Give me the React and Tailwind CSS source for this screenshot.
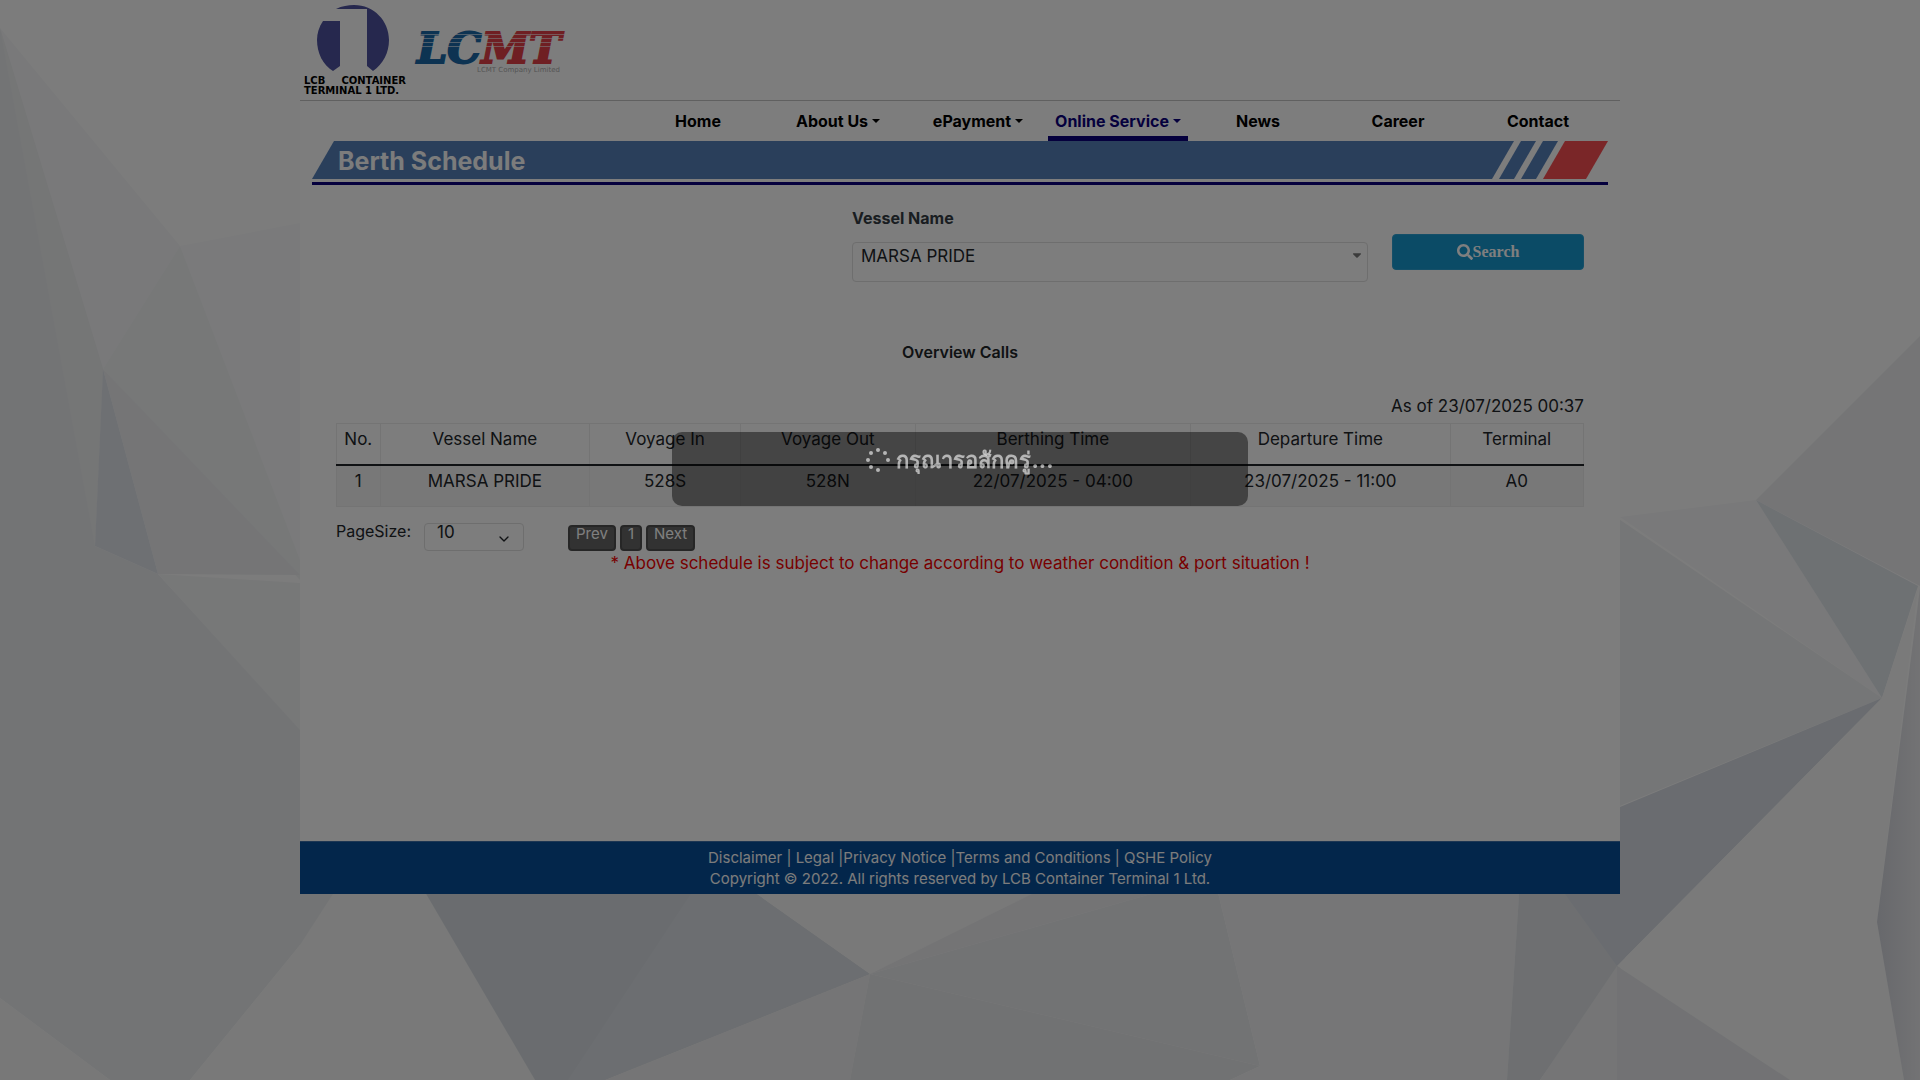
import React from "react";
import { FaSearch, FaCaretDown } from "react-icons/fa";
import { ChevronDown } from "lucide-react";

const facets = [
  ["0,28 180,246 103,369", "#f2f3f4"],
  ["180,246 300,223 300,560", "#f4f5f6"],
  ["180,246 300,560 300,580 103,369", "#eef0f1"],
  ["0,28 103,369 95,546 158,574 300,728 700,900 300,945 190,1080 110,1080 0,998", "#e7e9eb"],
  ["0,28 103,369 95,546", "#ebeced"],
  ["103,369 300,575 158,574", "#eaebed"],
  ["158,574 300,583 300,730", "#eff0f1"],
  ["103,369 158,574 95,546", "#dde1e7"],
  ["0,998 110,1080 0,1080", "#f0f1f1"],
  ["300,945 342,880 425,880 535,1080 190,1080", "#f2f3f2"],
  ["418,880 737,880 870,974 605,1080 535,1080", "#d4d9df"],
  ["700,880 737,880 870,974 605,1080 568,1080", "#d9dde2"],
  ["737,880 1060,880 870,974", "#f2f2f2"],
  ["1060,880 1200,880 870,974", "#e9e9eb"],
  ["1200,880 1215,880 1260,1066 870,974", "#e5e6e9"],
  ["870,974 850,1080 605,1080", "#ebebec"],
  ["870,974 1260,1066 1230,1080 850,1080", "#e3e4e6"],
  ["1215,880 1520,880 1507,1080 1230,1080 1260,1066", "#ecedee"],
  ["1520,880 1625,880 1625,962 1540,1080 1507,1080", "#dcdfe3"],
  ["1617,966 1618,1080 1540,1080", "#eaebec"],
  ["1620,517 1756,500 1882,698", "#f2f3f4"],
  ["1610,513 1882,698 1610,810", "#ebecee"],
  ["1756,500 1920,336 1920,586", "#eaebed"],
  ["1756,500 1918,586 1882,698", "#dde2e7"],
  ["1882,698 1620,807 1560,830 1565,894 1617,966", "#d4d9e0"],
  ["1882,698 1918,588 1877,922 1904,1080 1790,1080 1617,966", "#f4f5f4"],
  ["1617,966 1790,1080 1617,1080", "#e4e5e8"],
];

function Backdrop() {
  return (
    <svg className="absolute inset-0 -z-10 h-full w-full" viewBox="0 0 1920 1080" preserveAspectRatio="xMidYMid slice" aria-hidden="true">
      <defs>
        <linearGradient id="edge" x1="0" x2="1" y1="0" y2="0">
          <stop offset="0" stopColor="#cfd1d8" />
          <stop offset="1" stopColor="#e6e6e9" />
        </linearGradient>
      </defs>
      <rect width="1920" height="1080" fill="#f9f9f9" />
      {facets.map(([points, fill]) => (
        <polygon key={points} points={points} fill={fill} />
      ))}
      <polygon points="1920,588 1877,922 1904,1080 1920,1080" fill="url(#edge)" />
    </svg>
  );
}

function LcbLogo() {
  return (
    <a href="#home" className="flex w-[102px] flex-col text-black">
      <svg className="ml-3 h-[68px] w-[74px]" viewBox="0 0 74 68" aria-hidden="true">
        <g fill="#4c509c">
          <path d="M7 17H24V62L17 67C7 61 1 49 1 36C1 29 3 23 7 17Z" />
          <path d="M20 5C26 2 32 1 38 1C58 1 73 17 73 36C73 49 67 60 57 67L51 62V5Z" />
        </g>
      </svg>
      <span className="mt-1 w-full text-[10px] leading-[10px] font-bold whitespace-nowrap font-['DejaVu_Sans',sans-serif]">
        <span className="flex justify-between"><span>LCB</span><span>CONTAINER</span></span>
        <span className="block">TERMINAL 1 LTD.</span>
      </span>
    </a>
  );
}

function LcmtLogo() {
  return (
    <a href="#lcmt" aria-label="LCMT" className="block">
      <svg className="h-[76px] w-[164px]" viewBox="0 0 164 76">
        <text x="3" y="59" fontFamily="'DejaVu Serif', serif" fontSize="43" fontWeight="bold" fontStyle="italic" strokeWidth="2">
          <tspan fill="#1a67a5" stroke="#1a67a5">LC</tspan>
          <tspan fill="#df3f46" stroke="#df3f46">MT</tspan>
        </text>
        <g fill="#fafafa" opacity="0.6">
          <rect y="30" width="164" height="1" />
          <rect y="34" width="164" height="1" />
          <rect y="38" width="164" height="1" />
          <rect y="42" width="164" height="1" />
        </g>
        <text x="63" y="68" fontFamily="'DejaVu Sans', sans-serif" fontSize="7" fill="#aaa">LCMT Company Limited</text>
      </svg>
    </a>
  );
}

const nav = [
  ["Home"],
  ["About Us", true],
  ["ePayment", true],
  ["Online Service", true, true],
  ["News"],
  ["Career"],
  ["Contact"],
];

const columns = [
  ["No.", "w-[3.5%]"],
  ["Vessel Name", "w-[16.8%]"],
  ["Voyage In", "w-[12.1%]"],
  ["Voyage Out", "w-[14%]"],
  ["Berthing Time", "w-[22.1%]"],
  ["Departure Time", "w-[20.8%]"],
  ["Terminal", "w-[10.7%]"],
];

const rows = [["1", "MARSA PRIDE", "528S", "528N", "22/07/2025 - 04:00", "23/07/2025 - 11:00", "A0"]];

const pagerButton = "h-[26px] rounded-sm border-2 border-[#4c4c4c] bg-[#646464] px-1.5 pb-2 text-[15px] leading-[14px] text-white";

function Header() {
  return (
    <header>
      <div className="flex h-[101px] items-start gap-2 border-b border-[#c0c0c0] px-1">
        <div className="pt-1"><LcbLogo /></div>
        <div className="pt-1"><LcmtLogo /></div>
      </div>
      <nav className="flex h-10 justify-end px-3">
        {nav.map(([label, caret, active]) => (
          <a
            key={label}
            href="#nav"
            className={
              "flex w-[140px] items-center justify-center gap-1 border-b-5 pt-1 text-base font-bold whitespace-nowrap " +
              (active ? "border-[#0a007a] text-[#0a007a]" : "border-transparent text-black")
            }
          >
            {label}
            {caret && <span className="border-x-4 border-t-4 border-x-transparent border-t-current" />}
          </a>
        ))}
      </nav>
    </header>
  );
}

function TitleBar() {
  return (
    <div className="mx-3 border-b-3 border-[#0a007a] pb-[3px]">
      <div className="flex h-[38px]">
        <h1 className="flex-1 bg-[#547eb6] pl-[26px] text-[25px] leading-10 font-bold text-[#f8f8f8] [clip-path:polygon(22px_0,100%_0,calc(100%-22px)_100%,0_100%)]">
          Berth Schedule
        </h1>
        <span className="-ml-[15px] w-[37px] bg-[#547eb6] [clip-path:polygon(22px_0,100%_0,15px_100%,0_100%)]" />
        <span className="-ml-[15px] w-[37px] bg-[#547eb6] [clip-path:polygon(22px_0,100%_0,15px_100%,0_100%)]" />
        <span className="-ml-[15px] w-[65px] bg-[#f44c50] [clip-path:polygon(22px_0,100%_0,43px_100%,0_100%)]" />
      </div>
    </div>
  );
}

function SearchForm() {
  return (
    <form className="flex justify-end gap-6 pt-[21px]" onSubmit={(e) => e.preventDefault()}>
      <div className="w-[516px]">
        <label htmlFor="vessel" className="block text-base leading-6 font-bold text-[#333a42]">Vessel Name</label>
        <div className="relative mt-3">
          <select id="vessel" className="block h-10 w-full appearance-none rounded border border-[#dcdcdc] bg-[#fafafa] px-2 pb-3 text-[17px] leading-6 text-[#212529]">
            <option>MARSA PRIDE</option>
          </select>
          <FaCaretDown className="pointer-events-none absolute top-1.5 right-1 size-3.5 text-[#777]" />
        </div>
      </div>
      <button className="mt-7 flex h-9 w-48 items-center justify-center rounded border border-[#2a9fd0] bg-[#1696cc] font-['Liberation_Serif',serif] text-base font-bold text-white">
        <FaSearch />Search
      </button>
    </form>
  );
}

function Schedule() {
  return (
    <section>
      <h2 className="mt-14 text-center text-base leading-7 font-semibold">Overview Calls</h2>
      <p className="mt-7 text-right text-[17px] leading-6">As of 23/07/2025 00:37</p>
      <table className="mt-[5px] w-full table-fixed border-collapse text-center text-[17px] leading-6">
        <thead>
          <tr className="h-[41px] border-b-2 border-[#212529]">
            {columns.map(([label, width]) => (
              <th key={label} className={width + " border-x border-t border-[#e8e8e8] pt-[3px] align-top font-normal whitespace-nowrap"}>{label}</th>
            ))}
          </tr>
        </thead>
        <tbody>
          {rows.map((row) => (
            <tr key={row[0]} className="h-[42px] bg-[#f0f0f0]">
              {row.map((cell, i) => (
                <td key={i} className="border-x border-b border-[#e8e8e8] pt-[3px] align-top whitespace-nowrap">{cell}</td>
              ))}
            </tr>
          ))}
        </tbody>
      </table>
      <div className="flex items-start pt-3">
        <label htmlFor="size" className="w-[88px] text-base leading-6 whitespace-nowrap">PageSize:</label>
        <div className="relative mt-1">
          <select id="size" className="block h-7 w-[100px] appearance-none rounded border border-[#dcdcdc] bg-[#fafafa] px-3 pb-3 text-[17px] leading-4">
            <option>10</option>
          </select>
          <ChevronDown className="pointer-events-none absolute top-2 right-3 size-4" />
        </div>
        <div className="ml-11 flex gap-1 pt-1.5">
          <button className={pagerButton}>Prev</button>
          <button className={pagerButton}>1</button>
          <button className={pagerButton}>Next</button>
        </div>
      </div>
      <p className="text-center text-[17px] leading-6 text-[#f00000]">
        * Above schedule is subject to change according to weather condition &amp; port situation !
      </p>
    </section>
  );
}

function Footer() {
  return (
    <footer className="border-t border-[#3a6ca6] bg-[#064c96] py-[5px] text-center text-[15px] leading-[21px] text-[#f8f8f8]">
      <p>
        <a href="#disclaimer">Disclaimer</a> | <a href="#legal">Legal</a> |<a href="#privacy">Privacy Notice</a> |<a href="#terms">Terms and Conditions</a> | <a href="#qshe">QSHE Policy</a>
      </p>
      <p>Copyright © 2022. All rights reserved by LCB Container Terminal 1 Ltd.</p>
    </footer>
  );
}

const dots = [[12, 2], [19, 5], [22, 12], [12, 22], [5, 19], [2, 12], [5, 5]];

function LoadingOverlay() {
  return (
    <div className="fixed inset-0 z-10 bg-black/50">
      <div role="status" className="mx-auto mt-[432px] flex h-[74px] w-[30%] items-start justify-center gap-1.5 rounded-[10px] bg-black/45 text-white/60">
        <svg className="mt-4 size-6" viewBox="0 0 24 24" fill="currentColor" aria-hidden="true">
          {dots.map(([x, y]) => (
            <circle key={x + "-" + y} cx={x} cy={y} r="2" />
          ))}
        </svg>
        <p className="pt-3 text-[22px] leading-8 font-bold whitespace-nowrap">กรุณารอสักครู่...</p>
      </div>
    </div>
  );
}

export default function App() {
  return (
    <div className="relative isolate min-h-screen overflow-hidden font-['Inter',sans-serif] text-[#212529]">
      <Backdrop />
      <div className="mx-auto max-w-[1320px] bg-[#fafafa]">
        <Header />
        <TitleBar />
        <main className="min-h-[656px] px-9">
          <SearchForm />
          <Schedule />
        </main>
        <Footer />
      </div>
      <LoadingOverlay />
    </div>
  );
}
